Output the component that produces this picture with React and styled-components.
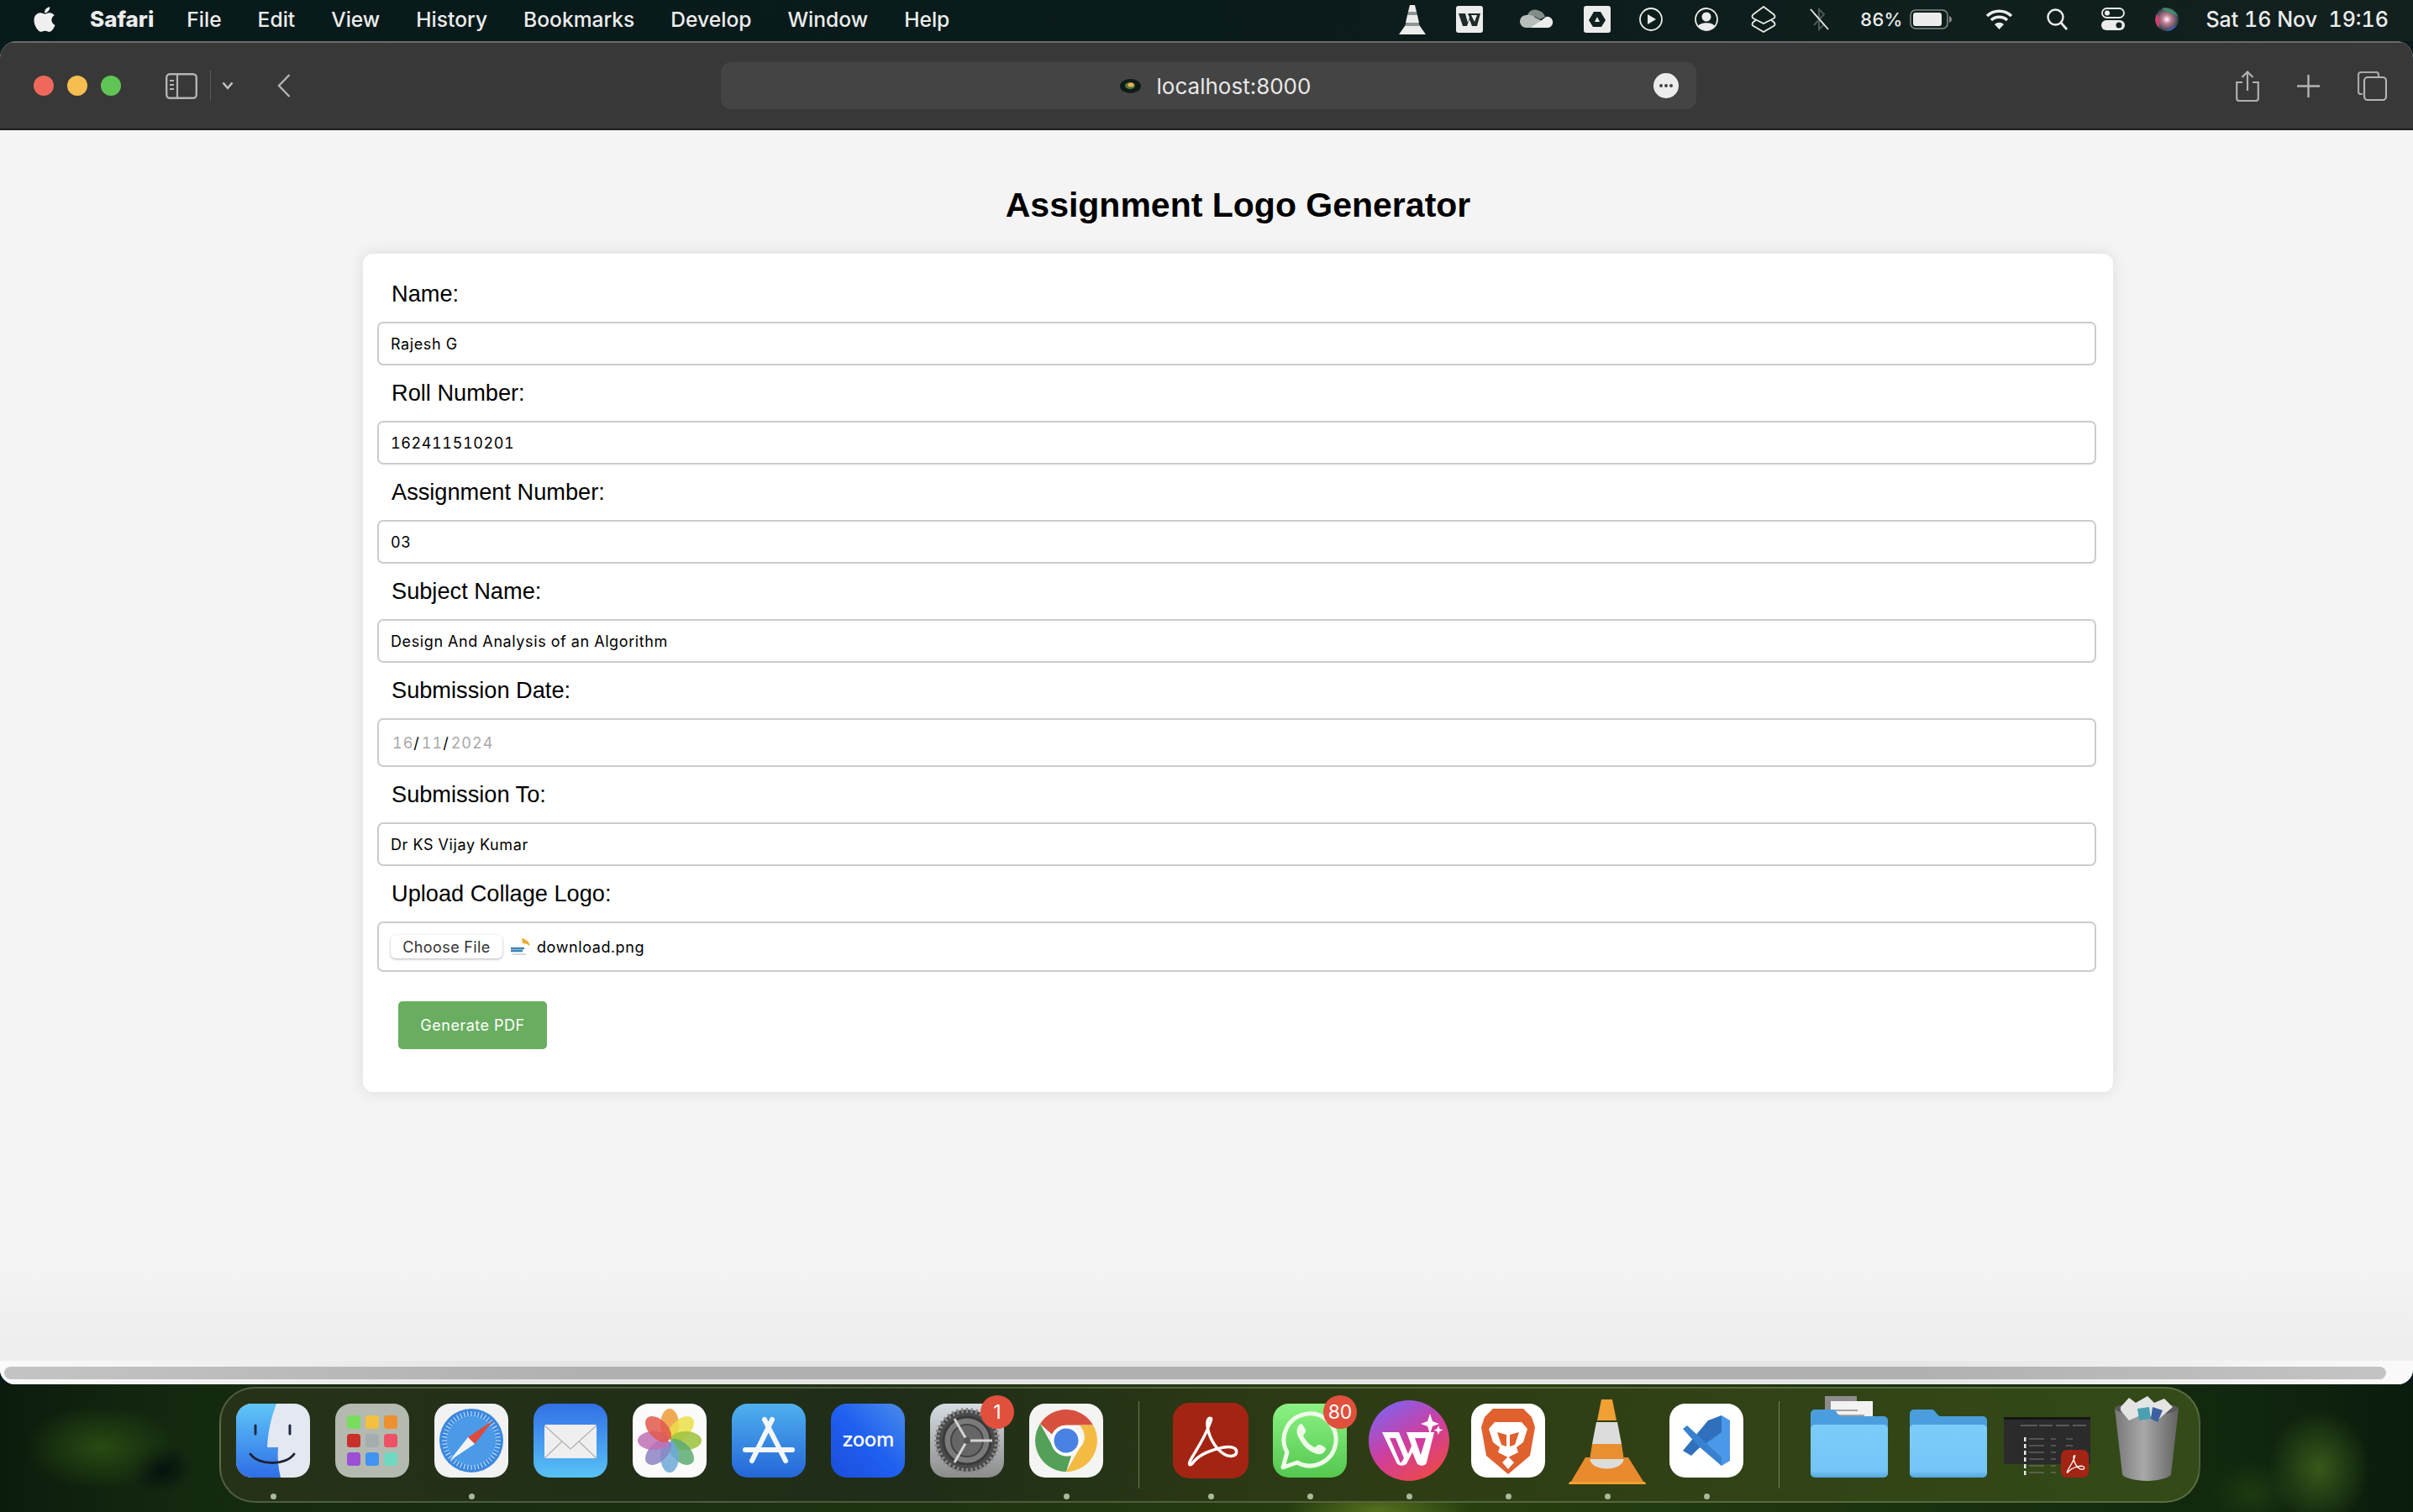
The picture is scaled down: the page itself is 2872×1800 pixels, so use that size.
import React from 'react';
import styled, { createGlobalStyle } from 'styled-components';
import { FaApple } from 'react-icons/fa';

const GlobalStyle = createGlobalStyle`
    html, body {
        margin: 0;
        padding: 0;
        width: 2872px;
        height: 1800px;
        overflow: hidden;
        background: #0a1a1a;
    }
    * {
        box-sizing: border-box;
    }
`;

const Screen = styled.div`
    width: 2872px;
    height: 1800px;
    display: flex;
    flex-direction: column;
    overflow: hidden;
    font-family: Inter, "Liberation Sans", sans-serif;
`;

/* menu bar */
const MenuBar = styled.div`
    height: 49px;
    flex: none;
    display: flex;
    align-items: center;
    padding: 0 29px 3px 40px;
    color: #ececec;
    background: linear-gradient(90deg, #08191a 0%, #0a1b1b 50%, #12211f 100%);
`;

const AppleMark = styled(FaApple)`
    width: 32px;
    height: 34px;
    margin-left: -3px;
    color: #f0f0f0;
`;

const MenuItem = styled.span`
    font-size: ${props => props.$bold ? 26 : 24.6}px;
    font-weight: ${props => props.$bold ? 800 : 500};
    margin-left: ${props => props.$first ? '38px' : '43px'};
    margin-right: ${props => props.$bold ? -4 : 0}px;
    line-height: 1;
    white-space: nowrap;
`;

const StatusRow = styled.div`
    margin-left: auto;
    display: flex;
    align-items: center;
`;

const StatusItem = styled.span`
    display: flex;
    align-items: center;
    margin-left: ${props => props.$ml}px;
    font-size: ${props => props.$size || 25}px;
    font-weight: 500;
    font-variant-numeric: tabular-nums;
    white-space: pre;
`;

/* browser window */
const Window = styled.div`
    height: 1599px;
    flex: none;
    display: flex;
    flex-direction: column;
    position: relative;
    z-index: 1;
    overflow: hidden;
    border-radius: 20px 20px 18px 18px;
    background: #f4f4f4;
`;

const Toolbar = styled.div`
    height: 106px;
    flex: none;
    display: grid;
    grid-template-columns: 858px 1161px 1fr;
    align-items: center;
    background: #383838;
    border-top: 2px solid #6b6b6b;
    border-bottom: 2px solid #1c1c1c;
`;

const ToolbarLeft = styled.div`
    display: flex;
    align-items: center;
    padding-left: 40px;
    height: 100%;
`;

const TrafficLight = styled.span`
    width: 24px;
    height: 24px;
    border-radius: 50%;
    margin-right: 16px;
    background: ${props => props.$color};
`;

const SidebarButton = styled.span`
    display: flex;
    margin-left: 37px;
`;

const ToolbarSep = styled.span`
    width: 1px;
    height: 36px;
    margin: 0 13px 0 15px;
    background: #5a5a5a;
`;

const BackButton = styled.span`
    display: flex;
    margin-left: 52px;
`;

const UrlField = styled.div`
    position: relative;
    height: 56px;
    display: flex;
    align-items: center;
    justify-content: center;
    gap: 19px;
    padding-left: 16px;
    border-radius: 12px;
    background: #444444;
    color: #e8e8e8;
    font-size: 26px;
`;

const MoreButton = styled.span`
    position: absolute;
    right: 21px;
    top: 13px;
    width: 30px;
    height: 30px;
    border-radius: 50%;
    background: #ececec;
    display: flex;
    align-items: center;
    justify-content: center;
    gap: 2px;

    i {
        width: 4px;
        height: 4px;
        border-radius: 50%;
        background: #444;
    }
`;

const ToolbarRight = styled.div`
    display: flex;
    align-items: center;
    justify-content: flex-end;
    padding-right: 31px;
    gap: 45px;
`;

/* page */
const Viewport = styled.div`
    flex: 1;
    min-height: 0;
    overflow: hidden;
`;

const Page = styled.div`
    width: 2947px;
    height: 100%;
    background: linear-gradient(180deg, #f4f4f4 92%, #ededed 100%);
`;

const Title = styled.h1`
    margin: 0;
    padding: 66px 0 35px;
    text-align: center;
    font-family: "Liberation Sans", Arial, sans-serif;
    font-size: 41px;
    line-height: 46px;
    font-weight: 700;
    color: #000;
`;

const Card = styled.form`
    width: 2083px;
    height: 998px;
    margin: 0 auto;
    padding: 15px 20px 0 17px;
    background: #fff;
    border-radius: 12px;
    box-shadow: 0 0 18px rgba(0, 0, 0, 0.1);
`;

const FieldLabel = styled.label`
    display: flex;
    align-items: center;
    height: 66px;
    padding-left: 17px;
    font-family: "Liberation Sans", Arial, sans-serif;
    font-size: 27.2px;
    color: #000;
`;

const TextInput = styled.input`
    display: block;
    width: 100%;
    height: 52px;
    padding: 0 14px;
    border: 2px solid #cccccc;
    border-radius: 7px;
    outline: none;
    background: #fff;
    color: #000;
    font-family: Inter, sans-serif;
    font-size: 18px;
    font-variant-numeric: tabular-nums;
    letter-spacing: 0.6px;
`;

const FakeInput = styled.div`
    display: flex;
    align-items: center;
    width: 100%;
    height: ${props => props.$height}px;
    padding: 0 14px;
    border: 2px solid #cccccc;
    border-radius: 7px;
    background: #fff;
    color: #000;
    font-size: 18px;
    font-variant-numeric: tabular-nums;
    letter-spacing: 0.6px;
`;

const DatePart = styled.span`
    color: ${props => props.$sep ? '#000' : '#a9a9a9'};
    margin-left: ${props => props.$sep ? 0 : 2}px;
    letter-spacing: 1px;
`;

const ChooseFile = styled.span`
    width: 133px;
    height: 28px;
    display: flex;
    align-items: center;
    justify-content: center;
    border-radius: 6px;
    background: #fff;
    color: #333;
    letter-spacing: 0.4px;
    box-shadow: 0 1px 3px rgba(0, 0, 0, 0.3);
`;

const FileThumb = styled.svg`
    margin-left: 9px;
    flex: none;
`;

const FileName = styled.span`
    margin-left: 7px;
`;

const SubmitButton = styled.button`
    display: block;
    width: 177px;
    height: 57px;
    margin: 35px 0 0 25px;
    padding: 0 0 0 0;
    border: 0;
    border-radius: 5px;
    background: #69ae60;
    color: #fff;
    font-family: Inter, sans-serif;
    font-size: 18px;
    letter-spacing: 0.5px;
`;

const ScrollStrip = styled.div`
    height: 30px;
    flex: none;
    padding: 7px 32px 6px 5px;
    background: linear-gradient(90deg, #fafafa 0%, #e6e6e6 20%, #e6e6e6 80%, #fafafa 100%);
    border-top: 2px solid #f0f0f0;
`;

const ScrollThumb = styled.div`
    height: 100%;
    border-radius: 9px;
    background: linear-gradient(90deg, #c4c4c4 0%, #b0b0b0 25%, #b0b0b0 80%, #c4c4c4 100%);
`;

/* dock */
const DockArea = styled.div`
    flex: 1;
    padding: 3px 0 0 261px;
    background:
        radial-gradient(ellipse 110px 30px at 1640px 150px, #55701e 0%, transparent 100%),
        radial-gradient(ellipse 90px 50px at 120px 75px, #284a12 0%, transparent 100%),
        radial-gradient(ellipse 60px 70px at 2760px 100px, #38581a 0%, transparent 100%),
        radial-gradient(ellipse 50px 40px at 2680px 130px, #1d3a10 0%, transparent 100%),
        radial-gradient(ellipse 40px 30px at 190px 100px, #03100e 0%, transparent 100%),
        linear-gradient(90deg, #0c1c0c 0%, #142a10 8%, #1f3410 40%, #27400f 60%, #12280f 92%, #0a1c0c 100%);
`;

const Dock = styled.div`
    width: 2358px;
    height: 138px;
    display: flex;
    padding: 18px 0 0 18px;
    border: 2px solid rgba(190, 205, 170, 0.28);
    border-radius: 42px;
    background: linear-gradient(90deg, #263218 0%, #1f2d18 35%, #2d3b14 55%, #344a18 100%);
`;

const Slot = styled.div`
    position: relative;
    flex: none;
    width: ${props => props.$w}px;
    margin-left: ${props => props.$ml}px;
    display: flex;
    flex-direction: column;
    align-items: center;
`;

const SlotIcon = styled.div`
    position: relative;
    height: 88px;
    width: 100%;
    display: flex;
    align-items: center;
    justify-content: center;

    svg {
        overflow: visible;
        flex: none;
    }
`;

const RunDot = styled.span`
    width: 7px;
    height: 7px;
    margin-top: 19px;
    border-radius: 50%;
    background: ${props => props.$on ? '#a9ba9b' : 'transparent'};
`;

const DockDivider = styled.span`
    flex: none;
    width: 1px;
    height: 104px;
    margin: -3px 0 0 ${props => props.$ml}px;
    background: rgba(210, 220, 195, 0.4);
`;

const Badge = styled.span`
    position: absolute;
    top: -10px;
    right: -12px;
    width: 40px;
    height: 40px;
    display: flex;
    align-items: center;
    justify-content: center;
    border-radius: 50%;
    background: #e0503c;
    color: #fff;
    font-size: 23px;
`;

/* status bar drawings */
const VlcMini = () => (
    <svg width="32" height="36" viewBox="0 0 32 36">
        <path d="M13 1h6l2 8H11zM10 13h12l2 9H8zM7 26h18l7 10H0z" fill="#ececec" />
        <path d="M11 9h10l1 4H10zM8.500 22h15l1.500 4H7z" fill="#8d9593" />
    </svg>
);

const WpsMini = () => (
    <svg width="32" height="32" viewBox="0 0 32 32">
        <rect width="32" height="32" rx="3" fill="#ececec" />
        <path d="M3 9h8l3 11 2-6-2-5h15l-4 15h-6l-3-8-3 8H8z" fill="#1f2a2a" />
        <path d="M18 11h7l-3 8z" fill="#ececec" />
    </svg>
);

const CloudMini = () => (
    <svg width="40" height="27" viewBox="0 0 40 27">
        <path d="M9 9a9 9 0 0 1 16-4l-8 5-5 2z" fill="#81908c" />
        <path d="M15 4a10 10 0 0 1 15 6l-6 3-9-5z" fill="#7f8c88" />
        <path d="M8 8c3-1 6 0 9 2l9 5-14 8H7a7 7 0 0 1 1-15z" fill="#b8bdbb" />
        <path d="M31 10a6.500 6.500 0 0 1 3 13H12l14-9z" fill="#ececec" />
    </svg>
);

const DriveMini = () => (
    <svg width="32" height="32" viewBox="0 0 32 32">
        <rect width="32" height="32" rx="3" fill="#ececec" />
        <path d="M12 7h8l6 10-5 8H11l-5-8z" fill="#10201f" />
        <path d="M16 13l3 6h-6z" fill="#ececec" />
    </svg>
);

const PlayMini = () => (
    <svg width="28" height="28" viewBox="0 0 28 28">
        <circle cx="14" cy="14" r="13" fill="none" stroke="#ececec" strokeWidth="1.800" />
        <path d="M10 8l10 6-10 6z" fill="#ececec" />
    </svg>
);

const UserMini = () => (
    <svg width="28" height="28" viewBox="0 0 28 28">
        <circle cx="14" cy="14" r="13" fill="none" stroke="#ececec" strokeWidth="1.800" />
        <circle cx="14" cy="11" r="5.500" fill="#ececec" />
        <path d="M4 22c3-5 17-5 20 0-5 6-15 6-20 0z" fill="#ececec" />
    </svg>
);

const ShortcutsMini = () => (
    <svg width="30" height="32" viewBox="0 0 30 32">
        <path d="M15 1l12 9c2 2 2 4 0 5l-12 6-12-6c-2-1-2-4 0-5z" fill="none" stroke="#ececec" strokeWidth="1.800" />
        <path d="M6 17l-3 2c-2 2-2 4 0 5l12 7 12-7c2-1 2-3 0-5l-3-2" fill="none" stroke="#ececec" strokeWidth="1.800" />
    </svg>
);

const BluetoothMini = () => (
    <svg width="23" height="30" viewBox="0 0 23 30">
        <path d="M5 8l12 13-6 6V3l6 6L5 22" fill="none" stroke="#4c5855" strokeWidth="2" />
        <path d="M1 3l21 24" stroke="#ececec" strokeWidth="1.800" />
    </svg>
);

const BatteryMini = () => (
    <svg width="50" height="24" viewBox="0 0 50 24">
        <rect x="1" y="1" width="44" height="22" rx="6" fill="none" stroke="#858c8a" strokeWidth="1.500" />
        <rect x="4" y="4" width="34" height="16" rx="3" fill="#ececec" />
        <path d="M47 8c2 1 3 2 3 4s-1 3-3 4z" fill="#858c8a" />
    </svg>
);

const WifiMini = () => (
    <svg width="33" height="26" viewBox="0 0 33 26">
        <path d="M2 9a21 21 0 0 1 29 0M7 14a14 14 0 0 1 19 0" fill="none" stroke="#ececec" strokeWidth="3.600" />
        <path d="M11 19a8 8 0 0 1 11 0l-5.500 6z" fill="#ececec" />
    </svg>
);

const SearchMini = () => (
    <svg width="25" height="26" viewBox="0 0 25 26">
        <circle cx="10.500" cy="10.500" r="9" fill="none" stroke="#ececec" strokeWidth="2.400" />
        <path d="M17 17l7 8" stroke="#ececec" strokeWidth="2.800" />
    </svg>
);

const ControlMini = () => (
    <svg width="28" height="28" viewBox="0 0 28 28">
        <rect x="1" y="1" width="26" height="11" rx="5.500" fill="none" stroke="#ececec" strokeWidth="1.800" />
        <circle cx="7" cy="6.500" r="3" fill="#ececec" />
        <rect y="15" width="28" height="12" rx="6" fill="#ececec" />
        <circle cx="21" cy="21" r="3.500" fill="#10201f" />
    </svg>
);

const SiriMini = () => (
    <svg width="28" height="28" viewBox="0 0 28 28">
        <defs>
            <radialGradient id="siriCore" cx="0.500" cy="0.500" r="0.500">
                <stop offset="0" stopColor="#ffffff" />
                <stop offset="0.350" stopColor="#c8829a" />
                <stop offset="1" stopColor="#2b3f45" />
            </radialGradient>
        </defs>
        <circle cx="14" cy="14" r="14" fill="url(#siriCore)" />
        <path d="M2 8a14 14 0 0 0 2 16c2-6 3-11-2-16z" fill="#d0406e" />
        <path d="M8 1c8-2 16 3 19 9-6-3-13-4-19-9z" fill="#3c8f6c" />
        <path d="M26 20a14 14 0 0 1-14 8c5-2 10-5 14-8z" fill="#3f5fbf" />
    </svg>
);

/* toolbar drawings */
const SidebarGlyph = () => (
    <svg width="38" height="31" viewBox="0 0 38 31">
        <rect x="1.200" y="1.200" width="35.600" height="28.600" rx="4" fill="none" stroke="#b4b4b4" strokeWidth="2.400" />
        <path d="M14 1v29" stroke="#b4b4b4" strokeWidth="2.200" />
        <path d="M5 9h5M5 14h5M5 19h5" stroke="#b4b4b4" strokeWidth="2" />
    </svg>
);

const ChevronDown = () => (
    <svg width="14" height="10" viewBox="0 0 14 10">
        <path d="M1.500 1.500L7 8l5.500-6.500" fill="none" stroke="#c6c6c6" strokeWidth="2.400" />
    </svg>
);

const BackGlyph = () => (
    <svg width="16" height="28" viewBox="0 0 16 28">
        <path d="M14.500 1L2 14l12.500 13" fill="none" stroke="#b4b4b4" strokeWidth="2.400" />
    </svg>
);

const Favicon = () => (
    <svg width="25" height="17" viewBox="0 0 25 17">
        <ellipse cx="12.500" cy="8.500" rx="12.500" ry="8.500" fill="#0e1c18" />
        <ellipse cx="12" cy="8" rx="6" ry="4" fill="#5a7a30" />
        <ellipse cx="13" cy="7" rx="3.500" ry="2.500" fill="#e9b060" />
    </svg>
);

const ShareGlyph = () => (
    <svg width="28" height="37" viewBox="0 0 28 37">
        <path d="M8 14H1.200v19a3 3 0 0 0 3 3h19.600a3 3 0 0 0 3-3V14H20" fill="none" stroke="#b0b0b0" strokeWidth="2.200" />
        <path d="M14 24V2M7.500 8L14 1.500 20.500 8" fill="none" stroke="#b0b0b0" strokeWidth="2.200" />
    </svg>
);

const PlusGlyph = () => (
    <svg width="27" height="27" viewBox="0 0 27 27">
        <path d="M13.500 0v27M0 13.500h27" stroke="#b4b4b4" strokeWidth="2.400" />
    </svg>
);

const TabsGlyph = () => (
    <svg width="35" height="35" viewBox="0 0 35 35">
        <path d="M6 27H4a3 3 0 0 1-3-3V4a3 3 0 0 1 3-3h18a3 3 0 0 1 3 3v2" fill="none" stroke="#a8a8a8" strokeWidth="2.200" />
        <rect x="8" y="7" width="26" height="27" rx="4" fill="none" stroke="#b4b4b4" strokeWidth="2.200" />
    </svg>
);

/* dock drawings */
const FinderIcon = () => (
    <svg width="88" height="88" viewBox="0 0 88 88">
        <defs>
            <linearGradient id="finderBlue" x1="0" y1="0" x2="0" y2="1">
                <stop offset="0" stopColor="#5fc6f8" />
                <stop offset="1" stopColor="#2f6ee6" />
            </linearGradient>
            <clipPath id="finderClip"><rect width="88" height="88" rx="19" /></clipPath>
        </defs>
        <g clipPath="url(#finderClip)">
            <rect width="88" height="88" fill="#e4e8f0" />
            <path d="M0 0h48c-6 16-10 32-11 52h13c-1 12 0 24 3 36H0z" fill="url(#finderBlue)" />
        </g>
        <path d="M23 26v10M64 26v10" stroke="#1d2a44" strokeWidth="3" strokeLinecap="round" />
        <path d="M17 60c10 14 42 14 52 0" fill="none" stroke="#1d2233" strokeWidth="3" strokeLinecap="round" />
    </svg>
);

const launchColors = ['#79dc5f', '#f5c040', '#ec9030', '#c9302a', '#a4adb0', '#ec5266', '#9a4fd6', '#3f94f2', '#6fd8c0'];

const LaunchpadIcon = () => (
    <svg width="88" height="88" viewBox="0 0 88 88">
        <rect width="88" height="88" rx="19" fill="#b4bab0" />
        {launchColors.map((color, i) => (
            <rect key={color} x={14 + (i % 3) * 22} y={14 + Math.floor(i / 3) * 22} width="16" height="16" rx="3.500" fill={color} />
        ))}
    </svg>
);

const safariTicks = Array.from({ length: 48 }, (_, i) => i * 7.5);

const SafariIcon = () => (
    <svg width="88" height="88" viewBox="0 0 88 88">
        <rect width="88" height="88" rx="19" fill="#f2f2f2" />
        <circle cx="44" cy="44" r="38" fill="#3a88e0" />
        <circle cx="44" cy="44" r="30" fill="#4a9ae8" />
        {safariTicks.map(angle => (
            <path key={angle} d="M44 9v6" stroke="#d8e8f8" strokeWidth="1" transform={`rotate(${angle} 44 44)`} />
        ))}
        <path d="M70 20L48 48 40 40z" fill="#e04a3a" />
        <path d="M18 68l22-28 8 8z" fill="#f4f4f4" />
    </svg>
);

const MailIcon = () => (
    <svg width="88" height="88" viewBox="0 0 88 88">
        <defs>
            <linearGradient id="mailBg" x1="0" y1="0" x2="0" y2="1">
                <stop offset="0" stopColor="#3270e6" />
                <stop offset="1" stopColor="#58c2f6" />
            </linearGradient>
        </defs>
        <rect width="88" height="88" rx="19" fill="url(#mailBg)" />
        <rect x="13" y="25" width="62" height="40" rx="2" fill="#efefef" />
        <path d="M13 26l31 28 31-28M13 65l21-20M75 65L54 45" fill="none" stroke="#aeb0b2" strokeWidth="1.200" />
    </svg>
);

const photoPetals = ['#ee9a38', '#eadf48', '#9cc23c', '#5cac70', '#6ea8d8', '#8c84c4', '#c070b4', '#e0584c'];

const PhotosIcon = () => (
    <svg width="88" height="88" viewBox="0 0 88 88">
        <rect width="88" height="88" rx="19" fill="#fbfbfb" />
        {photoPetals.map((color, i) => (
            <ellipse key={color} cx="44" cy="25" rx="11" ry="19" fill={color} fillOpacity="0.85" transform={`rotate(${i * 45} 44 44)`} />
        ))}
        <circle cx="44" cy="44" r="1.500" fill="#fff" />
    </svg>
);

const AppStoreIcon = () => (
    <svg width="88" height="88" viewBox="0 0 88 88">
        <defs>
            <linearGradient id="storeBg" x1="0" y1="0" x2="0" y2="1">
                <stop offset="0" stopColor="#4eb0ee" />
                <stop offset="1" stopColor="#2466d8" />
            </linearGradient>
        </defs>
        <rect width="88" height="88" rx="19" fill="url(#storeBg)" />
        <path d="M48 19L24 68M39 19l25 49" stroke="#f4f8fc" strokeWidth="6" strokeLinecap="round" />
        <path d="M16 55h56" stroke="#f4f8fc" strokeWidth="6" strokeLinecap="round" />
    </svg>
);

const ZoomIcon = () => (
    <svg width="88" height="88" viewBox="0 0 88 88">
        <defs>
            <linearGradient id="zoomBg" x1="1" y1="0" x2="0" y2="1">
                <stop offset="0" stopColor="#4a8cec" />
                <stop offset="0.500" stopColor="#1f5ff0" />
                <stop offset="1" stopColor="#1c4edc" />
            </linearGradient>
        </defs>
        <rect width="88" height="88" rx="19" fill="url(#zoomBg)" />
        <text x="44" y="51" textAnchor="middle" fontFamily="Inter, sans-serif" fontSize="24" fontWeight="500" fill="#fff" letterSpacing="-0.400">zoom</text>
    </svg>
);

const gearTeeth = Array.from({ length: 40 }, (_, i) => i * 9);

const SettingsIcon = () => (
    <svg width="88" height="88" viewBox="0 0 88 88">
        <defs>
            <linearGradient id="settingsBg" x1="0" y1="0" x2="0" y2="1">
                <stop offset="0" stopColor="#d6dde2" />
                <stop offset="1" stopColor="#8c8c8c" />
            </linearGradient>
        </defs>
        <rect width="88" height="88" rx="19" fill="url(#settingsBg)" />
        <circle cx="44" cy="44" r="37" fill="#4a4a4a" />
        {gearTeeth.map(angle => (
            <path key={angle} d="M44 5v6" stroke="#888" strokeWidth="2.500" transform={`rotate(${angle} 44 44)`} />
        ))}
        <circle cx="44" cy="44" r="28" fill="#7a7a7a" stroke="#3a3a3a" strokeWidth="3" />
        <circle cx="44" cy="44" r="19" fill="#666" stroke="#444" strokeWidth="2" />
        <path d="M44 44h30M44 44L29 18M44 44L29 70" stroke="#d4d4d4" strokeWidth="3" />
        <circle cx="44" cy="44" r="4" fill="#555" />
    </svg>
);

const ChromeIcon = () => (
    <svg width="88" height="88" viewBox="0 0 88 88">
        <rect width="88" height="88" rx="19" fill="#f4f4f2" />
        <path d="M44 7a37 37 0 0 1 32 18.500H44a18.500 18.500 0 0 0-17 11L13 24A37 37 0 0 1 44 7z" fill="#d8503f" />
        <path d="M76 25.500A37 37 0 0 1 44 81l16-28a18.500 18.500 0 0 0-.500-27.500z" fill="#f3bb42" />
        <path d="M13 24l15 27a18.500 18.500 0 0 0 22 11L44 81A37 37 0 0 1 13 24z" fill="#54a058" />
        <circle cx="44" cy="44" r="18" fill="#fff" />
        <circle cx="44" cy="44" r="14.500" fill="#4a82e4" />
    </svg>
);

const AcrobatIcon = ({ size = 90, radius = 19 }) => (
    <svg width={size} height={size} viewBox="0 0 88 88">
        <rect width="88" height="88" rx={radius} fill="#a32413" />
        <path d="M44 18c-4-1-5 5-3 14 3 13 12 25 21 29 6 2 12 1 12-4 0-6-10-7-20-4-13 3-25 9-31 17-3 4-5 2-3-2 4-9 16-24 23-44 2-5 2-6 1-6z" fill="none" stroke="#fff" strokeWidth="3.400" strokeLinejoin="round" />
    </svg>
);

const WhatsAppIcon = () => (
    <svg width="88" height="88" viewBox="0 0 88 88">
        <defs>
            <linearGradient id="waBg" x1="0" y1="0" x2="0" y2="1">
                <stop offset="0" stopColor="#8bf283" />
                <stop offset="1" stopColor="#54c84f" />
            </linearGradient>
        </defs>
        <rect width="88" height="88" rx="19" fill="url(#waBg)" />
        <path d="M12 76l5-18a31 31 0 1 1 12 12z" fill="none" stroke="#edfbe8" strokeWidth="5" strokeLinejoin="round" />
        <path d="M33 24c-5 3-6 10-2 17 5 10 13 17 22 19 5 1 9-2 10-6 0-2-7-6-9-5l-4 3c-6-2-11-8-14-14l3-4c1-2-3-10-6-10z" fill="#edfbe8" />
    </svg>
);

const WpsIcon = () => (
    <svg width="96" height="104" viewBox="0 -8 96 104">
        <defs>
            <linearGradient id="wpsBg" x1="0.200" y1="0" x2="0.800" y2="1">
                <stop offset="0" stopColor="#7f63f2" />
                <stop offset="0.500" stopColor="#cf3e9e" />
                <stop offset="1" stopColor="#ee4a42" />
            </linearGradient>
        </defs>
        <ellipse cx="48" cy="44" rx="48" ry="48" fill="url(#wpsBg)" />
        <path d="M16 34h20l11 26 4-10-6-16h33l-9 36c-1 5-10 5-12 0l-5-12-6 12c-2 5-11 5-13 0z" fill="#fff" />
        <path d="M55 41h13l-6 20zM25 41h7l10 24-4 6z" fill="#cf3e9e" />
        <path d="M73 12l3 9 8 3-8 3-3 9-3-9-8-3 8-3z" fill="#fff" />
        <path d="M83 26l1.500 4 4 1.500-4 1.500-1.500 4-1.500-4-4-1.500 4-1.500z" fill="#fff" />
    </svg>
);

const BraveIcon = () => (
    <svg width="88" height="88" viewBox="0 0 88 88">
        <rect width="88" height="88" rx="19" fill="#fff" />
        <path d="M26 6h36l10 10 4 12-6 34-26 22-26-22-6-34 4-12z" fill="#e0602e" />
        <path d="M28 22h32l7 8-5 16-8 6 2 6-12 6-12-6 2-6-8-6-5-16z" fill="#fff" />
        <path d="M31 34l11 3v14l-6-2zM57 34l-11 3v14l6-2z" fill="#e0602e" />
        <path d="M37 70l7-7 7 7-7 8z" fill="#fff" />
    </svg>
);

const VlcIcon = () => (
    <svg width="90" height="104" viewBox="0 -8 90 104">
        <path d="M38-5h13l5 25H33z" fill="#f0a034" />
        <path d="M32 22h25l5 26H27z" fill="#dcdcdc" />
        <path d="M27 48h35l3 19H24z" fill="#e89030" />
        <path d="M24 66h41l5 16H20z" fill="#dcdcdc" />
        <path d="M19 64h5c0 18 41 18 41 0h5l20 32H0z" fill="#ea8a2e" />
        <path d="M0 93h90l1 3H-1z" fill="#f0a034" />
    </svg>
);

const VscodeIcon = () => (
    <svg width="88" height="88" viewBox="0 0 88 88">
        <rect width="88" height="88" rx="19" fill="#fff" />
        <path d="M62 14l10 6v48l-10 6L42 54V34z" fill="#4a98e8" />
        <path d="M62 14v20L34 54l-8 8-10-6 30-36z" fill="#2e70bc" />
        <path d="M16 30l5-4 41 38v10L34 50z" fill="#3880d0" />
    </svg>
);

const FolderIcon = ({ docs, gid }) => (
    <svg width="92" height="104" viewBox="0 -8 92 104">
        <defs>
            <linearGradient id={gid} x1="0" y1="0" x2="0" y2="1">
                <stop offset="0" stopColor="#7cccfb" />
                <stop offset="0.880" stopColor="#74c4f6" />
                <stop offset="1" stopColor="#55a6dc" />
            </linearGradient>
        </defs>
        {docs && (
            <g>
                <rect x="17" y="-9" width="38" height="40" fill="#8c8c8c" />
                <rect x="24" y="-3" width="50" height="40" fill="#f2f2f2" />
                <path d="M28 8h28M28 14h36M28 20h20" stroke="#8a8a8a" strokeWidth="1.500" />
            </g>
        )}
        <path d="M0 12a5 5 0 0 1 5-5h21c5 0 6 8 11 8h50a5 5 0 0 1 5 5v62a5 5 0 0 1-5 5H5a5 5 0 0 1-5-5z" fill="#4a9ede" />
        <path d="M0 30a5 5 0 0 1 5-5h82a5 5 0 0 1 5 5v53a5 5 0 0 1-5 5H5a5 5 0 0 1-5-5z" fill={`url(#${gid})`} />
    </svg>
);

const thumbRows = [0, 1, 2, 3, 4, 5];

const ThumbIcon = () => (
    <svg width="103" height="104" viewBox="0 -8 103 104">
        <rect y="16" width="103" height="56" fill="#2b2b2b" />
        <rect y="16" width="103" height="3" fill="#151515" />
        <path d="M20 26h20M42 26h16M62 26h16M82 26h16" stroke="#8a8a8a" strokeWidth="1.200" />
        {thumbRows.map(row => (
            <g key={row}>
                <rect x="24" y={40 + row * 8} width="2.500" height="5" fill="#e8e8e8" />
                <path d={`M30 ${42 + row * 8}h18M56 ${42 + row * 8}h6M74 ${42 + row * 8}h8`} stroke="#7c7c7c" strokeWidth="1" />
            </g>
        ))}
        <g transform="translate(68 55)">
            <AcrobatIcon size={33} />
        </g>
    </svg>
);

const TrashIcon = () => (
    <svg width="78" height="104" viewBox="0 -8 78 104">
        <defs>
            <linearGradient id="trashBody" x1="0" y1="0" x2="1" y2="0">
                <stop offset="0" stopColor="#787878" />
                <stop offset="0.450" stopColor="#a8a8a8" />
                <stop offset="1" stopColor="#626262" />
            </linearGradient>
        </defs>
        <path d="M1 6h76l-9 78c-1 4-15 8-29 8s-28-4-29-8z" fill="url(#trashBody)" />
        <ellipse cx="39" cy="6" rx="38" ry="7" fill="#5a5a5a" />
        <path d="M8 4l10-11 8 6 14-8 8 8 12-5 10 10-16 14-18-6-18 8-10-12z" fill="#e4e4e4" />
        <path d="M28 6l14-2 2 14-14 2z" fill="#4aa0b0" />
        <path d="M46 4l12 4-6 14-8-4z" fill="#3c60a0" />
    </svg>
);

const menuItems = ['File', 'Edit', 'View', 'History', 'Bookmarks', 'Develop', 'Window', 'Help'];

const statusItems = [
    { ml: 0, node: <VlcMini /> },
    { ml: 36, node: <WpsMini /> },
    { ml: 44, node: <CloudMini /> },
    { ml: 36, node: <DriveMini /> },
    { ml: 34, node: <PlayMini /> },
    { ml: 38, node: <UserMini /> },
    { ml: 39, node: <ShortcutsMini /> },
    { ml: 40, node: <BluetoothMini /> },
    { ml: 37, node: '86%', size: 22 },
    { ml: 9, node: <BatteryMini /> },
    { ml: 40, node: <WifiMini /> },
    { ml: 40, node: <SearchMini /> },
    { ml: 40, node: <ControlMini /> },
    { ml: 36, node: <SiriMini /> },
    { ml: 32, node: 'Sat 16 Nov  19:16' },
];

const fields = [
    { label: 'Name:', value: 'Rajesh G' },
    { label: 'Roll Number:', value: '162411510201' },
    { label: 'Assignment Number:', value: '03' },
    { label: 'Subject Name:', value: 'Design And Analysis of an Algorithm' },
];

const firstDock = [
    { key: 'finder', Icon: FinderIcon, on: true },
    { key: 'launchpad', Icon: LaunchpadIcon },
    { key: 'safari', Icon: SafariIcon, on: true },
    { key: 'mail', Icon: MailIcon },
    { key: 'photos', Icon: PhotosIcon },
    { key: 'store', Icon: AppStoreIcon },
    { key: 'zoom', Icon: ZoomIcon },
    { key: 'settings', Icon: SettingsIcon, badge: '1' },
    { key: 'chrome', Icon: ChromeIcon, on: true },
];

const secondDock = [
    { key: 'acrobat', Icon: AcrobatIcon, w: 90, ml: 40, on: true },
    { key: 'whatsapp', Icon: WhatsAppIcon, w: 88, ml: 29, badge: '80', on: true },
    { key: 'wps', Icon: WpsIcon, w: 96, ml: 26, on: true },
    { key: 'brave', Icon: BraveIcon, w: 88, ml: 26, on: true },
    { key: 'vlc', Icon: VlcIcon, w: 90, ml: 29, on: true },
    { key: 'vscode', Icon: VscodeIcon, w: 88, ml: 29, on: true },
];

const FolderWithDocs = () => <FolderIcon docs gid="folderA" />;
const PlainFolder = () => <FolderIcon gid="folderB" />;

const thirdDock = [
    { key: 'docs', Icon: FolderWithDocs, w: 92, ml: 37 },
    { key: 'folder', Icon: PlainFolder, w: 92, ml: 26 },
    { key: 'thumb', Icon: ThumbIcon, w: 103, ml: 20 },
    { key: 'trash', Icon: TrashIcon, w: 78, ml: 28 },
];

const DockSlot = ({ item, ml }) => {
    const Icon = item.Icon;
    return (
        <Slot $w={item.w || 88} $ml={ml}>
            <SlotIcon>
                <Icon />
                {item.badge && <Badge>{item.badge}</Badge>}
            </SlotIcon>
            <RunDot $on={item.on} />
        </Slot>
    );
};

const App = () => (
    <Screen>
        <GlobalStyle />
        <MenuBar>
            <AppleMark />
            <MenuItem $bold $first>Safari</MenuItem>
            {menuItems.map(item => <MenuItem key={item}>{item}</MenuItem>)}
            <StatusRow>
                {statusItems.map((item, i) => (
                    <StatusItem key={i} $ml={item.ml} $size={item.size}>{item.node}</StatusItem>
                ))}
            </StatusRow>
        </MenuBar>
        <Window>
            <Toolbar>
                <ToolbarLeft>
                    <TrafficLight $color="#f0685c" />
                    <TrafficLight $color="#f6be50" />
                    <TrafficLight $color="#60c554" />
                    <SidebarButton><SidebarGlyph /></SidebarButton>
                    <ToolbarSep />
                    <ChevronDown />
                    <BackButton><BackGlyph /></BackButton>
                </ToolbarLeft>
                <UrlField>
                    <Favicon />
                    <span>localhost:8000</span>
                    <MoreButton><i /><i /><i /></MoreButton>
                </UrlField>
                <ToolbarRight>
                    <ShareGlyph />
                    <PlusGlyph />
                    <TabsGlyph />
                </ToolbarRight>
            </Toolbar>
            <Viewport>
                <Page>
                    <Title>Assignment Logo Generator</Title>
                    <Card>
                        {fields.map(field => (
                            <React.Fragment key={field.label}>
                                <FieldLabel>{field.label}</FieldLabel>
                                <TextInput readOnly value={field.value} />
                            </React.Fragment>
                        ))}
                        <FieldLabel>Submission Date:</FieldLabel>
                        <FakeInput $height={58}>
                            <DatePart>16</DatePart>
                            <DatePart $sep>/</DatePart>
                            <DatePart>11</DatePart>
                            <DatePart $sep>/</DatePart>
                            <DatePart>2024</DatePart>
                        </FakeInput>
                        <FieldLabel>Submission To:</FieldLabel>
                        <TextInput readOnly value="Dr KS Vijay Kumar" />
                        <FieldLabel>Upload Collage Logo:</FieldLabel>
                        <FakeInput $height={60}>
                            <ChooseFile>Choose File</ChooseFile>
                            <FileThumb width="25" height="22" viewBox="0 0 25 22">
                                <path d="M14 1c5 1 9 4 10 9-3-2-6-3-9-3z" fill="#eeaa30" />
                                <path d="M1 13h16M1 16h14" stroke="#3c82b4" strokeWidth="2.400" />
                                <path d="M3 20h16" stroke="#a0b8c8" strokeWidth="1" />
                            </FileThumb>
                            <FileName>download.png</FileName>
                        </FakeInput>
                        <SubmitButton type="button">Generate PDF</SubmitButton>
                    </Card>
                </Page>
            </Viewport>
            <ScrollStrip><ScrollThumb /></ScrollStrip>
        </Window>
        <DockArea>
            <Dock>
                {firstDock.map((item, i) => <DockSlot key={item.key} item={item} ml={i === 0 ? 0 : 30} />)}
                <DockDivider $ml={42} />
                {secondDock.map(item => <DockSlot key={item.key} item={item} ml={item.ml} />)}
                <DockDivider $ml={42} />
                {thirdDock.map(item => <DockSlot key={item.key} item={item} ml={item.ml} />)}
            </Dock>
        </DockArea>
    </Screen>
);

export default App;
